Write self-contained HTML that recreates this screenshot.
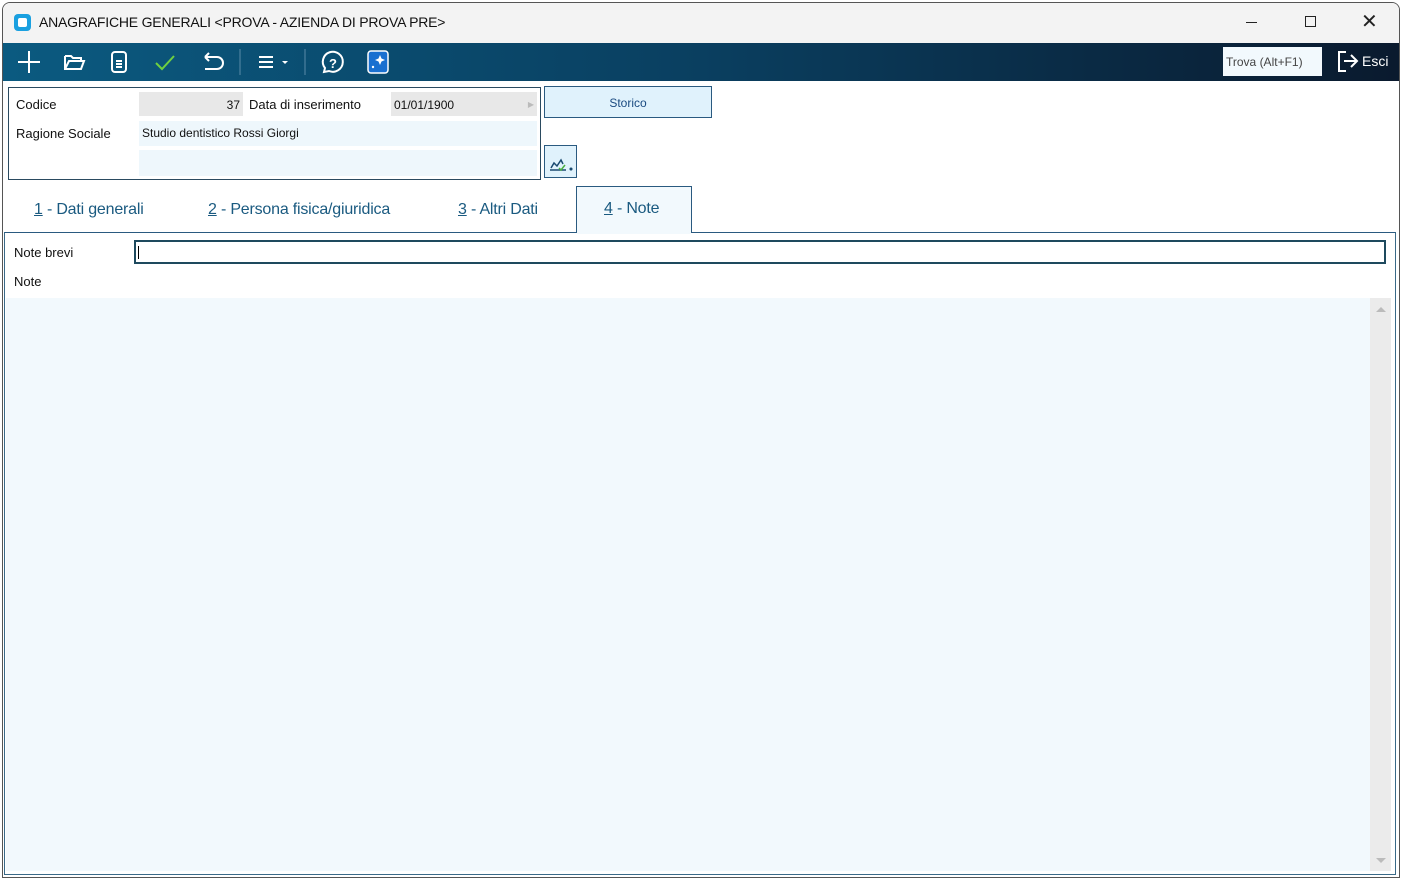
<!DOCTYPE html>
<html><head><meta charset="utf-8"><style>
*{box-sizing:border-box;margin:0;padding:0}
body{width:1403px;height:881px;background:#fff;font-family:"Liberation Sans",sans-serif;font-size:13px;color:#111;position:relative;overflow:hidden}
.win{position:absolute;left:2px;top:2px;width:1398px;height:876px;border:1px solid #555;border-radius:8px 8px 0 0;overflow:hidden;background:#fff}
.title{position:absolute;left:0;top:0;width:100%;height:40px;background:#f3f3f3;font-size:14px}
.tb{position:absolute;left:0;top:40px;width:100%;height:38px;background:linear-gradient(90deg,#0b5a80,#0a3f60 50%,#0a1a2e)}
.abs{position:absolute}
.inp{position:absolute;font-size:12px;padding:3px}
.tab{position:absolute;top:198px;font-size:16px;color:#1a5a80;letter-spacing:-0.2px}
.tab u{text-decoration:underline}
</style></head><body>
<div class="win">
<div class="title">
 <div class="abs" style="left:11px;top:11px;width:17px;height:17px;background:#1aa0e0;border-radius:4px"><div style="margin:4px;width:9px;height:9px;background:#fff;border-radius:2px"></div></div>
 <div class="abs" style="left:36px;top:11px;letter-spacing:-0.2px">ANAGRAFICHE GENERALI &lt;PROVA - AZIENDA DI PROVA PRE&gt;</div>
 <div class="abs" style="left:1243px;top:19px;width:11px;height:1px;background:#222"></div>
 <div class="abs" style="left:1302px;top:13px;width:11px;height:11px;border:1px solid #222"></div>
 <div class="abs" style="left:1358px;top:6px;font-size:20px;color:#222">✕</div>
</div>
<div class="tb">
 <svg class="abs" style="left:0;top:0" width="420" height="38" fill="none" stroke="#fff" stroke-width="2">
  <path d="M26 8v22M15 19h22"/>
  <path d="M62 13h6l2 2h8v3M62 13v13h16l3-8H66l-4 8"/>
  <rect x="109" y="9" width="14" height="20" rx="3"/><path d="M113 18h6M113 21h6M113 24h6"/>
  <path d="M153 20l6 6 12-13" stroke="#6fd040"/>
  <path d="M202 14h12a6 6 0 0 1 0 12h-12M202 14l4-4M202 14l4 4"/>
  <path d="M237 6v26" stroke="#5a8aa8" stroke-width="1"/>
  <path d="M256 14h14M256 19h14M256 24h14"/><path d="M279 18h6l-3 3z" fill="#fff" stroke="none"/>
  <path d="M302 6v26" stroke="#5a8aa8" stroke-width="1"/>
  <path d="M321 29l1-4a10 10 0 1 1 4 3z"/><text x="326" y="25" fill="#fff" stroke="none" font-size="13" font-family="Liberation Sans" font-weight="bold">?</text>
  <rect x="365" y="8" width="20" height="22" rx="3" fill="#1a70d0" stroke="#fff" stroke-width="1.5"/><path d="M377 12l1.5 3.5 3.5 1.5-3.5 1.5-1.5 3.5-1.5-3.5-3.5-1.5 3.5-1.5z" fill="#fff" stroke="none"/><circle cx="370" cy="24" r="1.2" fill="#fff" stroke="none"/>
 </svg>
 <div class="abs" style="left:1220px;top:4px;width:99px;height:29px;background:#f2f9fd;color:#444;font-size:12px;padding:8px 0 0 3px">Trova (Alt+F1)</div>
 <svg class="abs" style="left:1333px;top:7px" width="24" height="24" fill="none" stroke="#fff" stroke-width="2"><path d="M10 2H3v19h7M8 11h13M15 5l6 6-6 6"/></svg>
 <div class="abs" style="left:1359px;top:10px;color:#fff;font-size:14px">Esci</div>
</div>
<div class="abs" style="left:5px;top:84px;width:533px;height:93px;border:1px solid #2a4a60"></div>
<div class="abs" style="left:13px;top:94px">Codice</div>
<div class="inp" style="left:136px;top:89px;width:104px;height:24px;background:#e8e8e8;text-align:right;padding-top:6px">37</div>
<div class="abs" style="left:246px;top:94px">Data di inserimento</div>
<div class="inp" style="left:388px;top:89px;width:146px;height:24px;background:#e8e8e8;padding-top:6px">01/01/1900<span style="float:right;color:#bbb;font-size:8px;margin-top:2px">▶</span></div>
<div class="abs" style="left:13px;top:123px">Ragione Sociale</div>
<div class="inp" style="left:136px;top:118px;width:398px;height:25px;background:#eef7fc;padding-top:5px">Studio dentistico Rossi Giorgi</div>
<div class="inp" style="left:136px;top:147px;width:398px;height:26px;background:#eef7fc"></div>
<div class="abs" style="left:541px;top:83px;width:168px;height:32px;background:#e0f2fc;border:1px solid #2a5a80;color:#1a4a80;font-size:12px;text-align:center;padding-top:9px">Storico</div>
<div class="abs" style="left:541px;top:142px;width:33px;height:33px;background:#e0f2fc;border:1px solid #2a5a80">
 <svg width="31" height="31" fill="none" stroke="#1a4a70" stroke-width="1.5"><path d="M5 24h16M6 22l3-5 3 3 4-6 2 4"/><path d="M14 22l2 2 4-5" stroke="#4ab040"/><circle cx="26" cy="23" r="0.8" fill="#1a4a70"/></svg>
</div>
<div class="abs" style="left:573px;top:183px;width:116px;height:48px;background:#f2f9fd;border:1px solid #2a5a80;border-bottom:none"></div>
<div class="tab" style="left:31px"><u>1</u> - Dati generali</div>
<div class="tab" style="left:205px"><u>2</u> - Persona fisica/giuridica</div>
<div class="tab" style="left:455px"><u>3</u> - Altri Dati</div>
<div class="tab" style="left:601px;top:197px"><u>4</u> - Note</div>
<div class="abs" style="left:1px;top:229px;width:1392px;height:643px;border:1px solid #3a6a88;border-top:1px solid #2a5a80;background:#fff"></div>
<div class="abs" style="left:574px;top:228px;width:114px;height:3px;background:#f2f9fd"></div>
<div class="abs" style="left:11px;top:242px">Note brevi</div>
<div class="abs" style="left:131px;top:237px;width:1252px;height:24px;border:2px solid #1e4a5e;background:#fff"><div style="margin:4px 0 0 2px;width:1px;height:13px;background:#000"></div></div>
<div class="abs" style="left:11px;top:271px">Note</div>
<div class="abs" style="left:3px;top:295px;width:1385px;height:573px;background:#f2f9fd"></div>
<div class="abs" style="left:1367px;top:295px;width:21px;height:573px;background:#ebebeb"></div>
<div class="abs" style="left:1373px;top:304px;width:0;height:0;border:5px solid transparent;border-bottom:5px solid #bbb;border-top:none"></div>
<div class="abs" style="left:1373px;top:855px;width:0;height:0;border:5px solid transparent;border-top:5px solid #bbb;border-bottom:none"></div>
</div>
</body></html>
